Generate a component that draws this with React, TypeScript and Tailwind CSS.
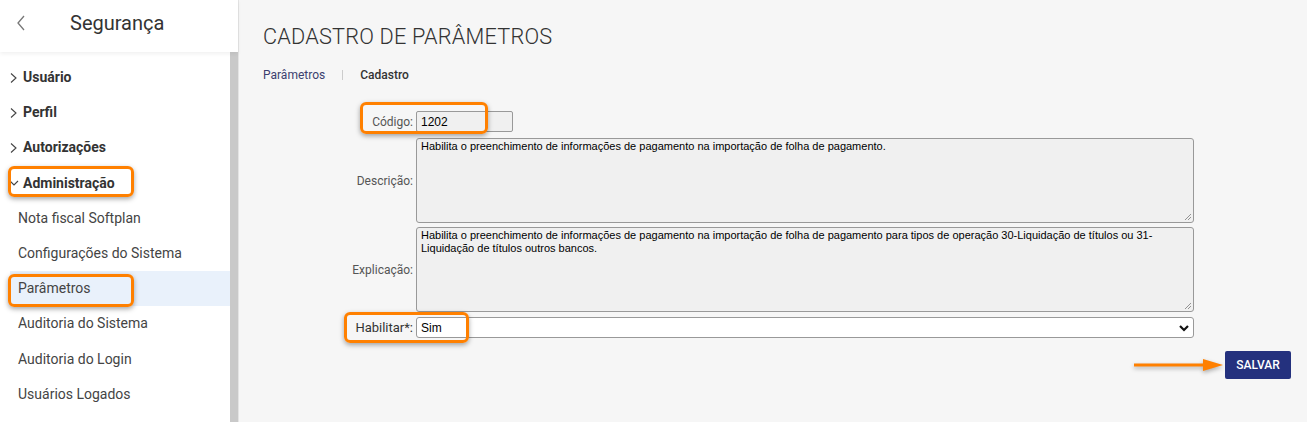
import React from 'react';

const menu = [
    { label: 'Usuário', open: false },
    { label: 'Perfil', open: false },
    { label: 'Autorizações', open: false },
    { label: 'Administração', open: true },
];

const subItems = [
    'Nota fiscal Softplan',
    'Configurações do Sistema',
    'Parâmetros',
    'Auditoria do Sistema',
    'Auditoria do Login',
    'Usuários Logados',
];

const descricao = 'Habilita o preenchimento de informações de pagamento na importação de folha de pagamento.';
const explicacao =
    'Habilita o preenchimento de informações de pagamento na importação de folha de pagamento para tipos de operação 30-Liquidação de títulos ou 31-Liquidação de títulos outros bancos.';

const Chevron = ({ down }: { down?: boolean }) => (
    <svg width="12" height="14" viewBox="0 0 12 14" className="mr-[3px] shrink-0">
        {down ? (
            <path d="M2 5 L6 9 L10 5" fill="none" stroke="#444" strokeWidth="1.1" />
        ) : (
            <path d="M3 2.5 L8 7 L3 11.5" fill="none" stroke="#444" strokeWidth="1.1" />
        )}
    </svg>
);

// orange annotation box used on the screenshot
const Mark = ({ className }: { className: string }) => (
    <div
        className={`absolute border-[3px] border-[#ff8000] rounded-[6px] shadow-[0_2px_5px_rgba(0,0,0,0.35)] pointer-events-none ${className}`}
    />
);

const Sidebar = () => (
    <aside className="w-[239px] h-full shrink-0 bg-white flex flex-col relative border-r border-[#e4e4e4]">
        {/* Header */}
        <div className="h-[52px] flex items-center shadow-[0_2px_4px_rgba(0,0,0,0.06)] z-10 bg-white">
            <svg width="10" height="16" viewBox="0 0 10 16" className="ml-[16px] -mt-[6px]">
                <path d="M8 1 L2 8 L8 15" fill="none" stroke="#777" strokeWidth="1.3" />
            </svg>
            <span className="ml-[44px] -mt-[6px] text-[20px] text-[#333] font-['Roboto',sans-serif]">Segurança</span>
        </div>

        <div className="flex flex-1 min-h-0">
            <nav className="flex-1 pt-[8px] font-['Roboto',sans-serif]">
                {menu.map((item) => (
                    <div key={item.label} className="h-[35.2px] flex items-center pl-[8px] text-[14px] font-bold text-[#333]">
                        <Chevron down={item.open} />
                        {item.label}
                    </div>
                ))}
                {subItems.map((s) =>
                    s === 'Parâmetros' ? (
                        <div key={s} className="h-[35.2px] flex items-center ml-[10px] pl-[8px] bg-[#e9f1fb] text-[14px] text-[#444]">
                            {s}
                        </div>
                    ) : (
                        <div key={s} className="h-[35.2px] flex items-center pl-[18px] text-[14px] text-[#444]">
                            {s}
                        </div>
                    )
                )}
            </nav>
            <div className="w-[8px] bg-[#c9c9c9]" />
        </div>
    </aside>
);

const Label = ({ children }: { children: React.ReactNode }) => (
    <div className="w-[151px] shrink-0 text-right pr-[1px] text-[12px] text-[#555] font-['Roboto',sans-serif]">{children}</div>
);

const Grip = () => (
    <svg width="9" height="9" viewBox="0 0 9 9" className="absolute right-[1px] bottom-[1px]">
        <path d="M8 2 L2 8 M8 5 L5 8" stroke="#888" strokeWidth="0.9" />
    </svg>
);

const Main = () => (
    <main className="flex-1 h-full bg-[#f6f6f6] pl-[24px] pr-[16px] pt-[23px]">
        <h1 className="text-[21.7px] font-light text-[#333] tracking-[0.2px] font-['Roboto',sans-serif] leading-[28px]">
            CADASTRO DE PARÂMETROS
        </h1>

        <div className="mt-[15px] flex items-center text-[12px] font-['Roboto',sans-serif]">
            <span className="text-[#3b3f6e]">Parâmetros</span>
            <span className="mx-[17px] w-px h-[10px] bg-[#ccc]" />
            <span className="text-[#333] font-medium">Cadastro</span>
        </div>

        <div className="mt-[27px] flex flex-col font-['Liberation_Sans',Arial,sans-serif] text-[12px] text-black">
            <div className="flex items-center gap-[2px]">
                <Label>Código:</Label>
                <div className="w-[97px] h-[21px] bg-[#f0f0f0] border border-[#999] rounded-[2px] px-[4px] flex items-center">1202</div>
            </div>

            <div className="flex items-center gap-[2px] mt-[6px]">
                <Label>Descrição:</Label>
                <div className="relative w-[778px] h-[85px] bg-[#f0f0f0] border border-[#999] rounded-[3px] px-[4px] pt-[1px] text-[11px] leading-[13px]">
                    {descricao}
                    <Grip />
                </div>
            </div>

            <div className="flex items-center gap-[2px] mt-[4px]">
                <Label>Explicação:</Label>
                <div className="relative w-[778px] h-[85px] bg-[#f0f0f0] border border-[#999] rounded-[3px] px-[4px] pt-[1px] text-[11px] leading-[13px]">
                    {explicacao}
                    <Grip />
                </div>
            </div>

            <div className="flex items-center gap-[2px] mt-[5px]">
                <Label>
                    <span className="text-[13px] text-[#333]">Habilitar*:</span>
                </Label>
                <div className="w-[778px] h-[21px] bg-white border border-[#999] rounded-[3px] pl-[4px] pr-[3px] flex items-center justify-between">
                    <span>Sim</span>
                    <svg width="12" height="8" viewBox="0 0 12 8">
                        <path d="M2 2 L6 6 L10 2" fill="none" stroke="#111" strokeWidth="2.2" />
                    </svg>
                </div>
            </div>

            <div className="flex justify-end mt-[13px]">
                <button className="w-[66px] h-[28px] bg-[#24317e] text-white text-[12px] font-medium rounded-[2px] font-['Roboto',sans-serif]">
                    SALVAR
                </button>
            </div>
        </div>
    </main>
);

export default function App() {
    return (
        <div className="relative w-full h-screen flex overflow-hidden">
            <Sidebar />
            <Main />

            {/* annotations */}
            <Mark className="left-[57px] top-[5px] w-[125px] h-[34px]" />
            <Mark className="left-[8px] top-[166px] w-[126px] h-[31px]" />
            <Mark className="left-[8px] top-[274px] w-[126px] h-[33px]" />
            <Mark className="left-[360px] top-[102px] w-[128px] h-[32px]" />
            <Mark className="left-[344px] top-[312px] w-[125px] h-[31px]" />
            <svg width="92" height="14" viewBox="0 0 92 14" className="absolute left-[1133px] top-[358px] drop-shadow-[0_2px_2px_rgba(0,0,0,0.3)]">
                <line x1="1" y1="7" x2="72" y2="7" stroke="#ff8000" strokeWidth="3" />
                <path d="M70 1 L90 7 L70 13 Z" fill="#ff8000" />
            </svg>
        </div>
    );
}
